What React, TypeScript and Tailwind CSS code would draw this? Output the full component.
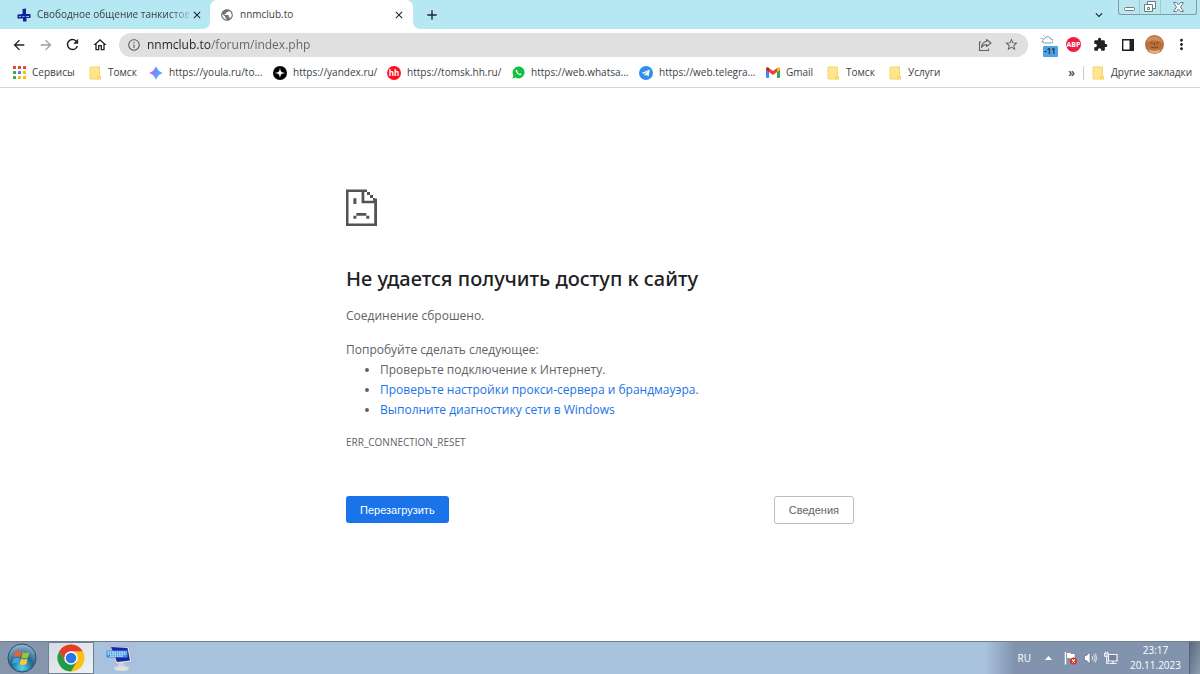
import React, { useState } from "react";
import {
  MdArrowBack,
  MdArrowForward,
  MdClose,
  MdAdd,
  MdExtension,
  MdExpandMore,
  MdInfoOutline,
  MdMoreVert,
  MdOutlineHome,
  MdPublic,
  MdRefresh,
  MdStarBorder,
} from "react-icons/md";

const FolderIcon = () => (
  <svg width="13" height="14" viewBox="0 0 13 14">
    <path d="M1 1h9.5v8.5l1 1V13H1z" fill="#ffe68f" stroke="#f7d56b" strokeWidth="1" />
    <path d="M8.5 13v-2.500h3V13z" fill="#ffe68f" stroke="#f3cd55" strokeWidth="0.8" />
  </svg>
);

const appColors = ["#ea4335", "#ea4335", "#ea4335", "#34a853", "#4285f4", "#fbbc05", "#34a853", "#fbbc05", "#fbbc05"];

const AppsIcon = () => (
  <svg width="13" height="13" viewBox="0 0 13 13">
    {appColors.map((color, i) => (
      <rect key={i} x={(i % 3) * 5} y={Math.floor(i / 3) * 5} width="3" height="3" rx="0.5" fill={color} />
    ))}
  </svg>
);

const YoulaIcon = () => (
  <svg width="14" height="14" viewBox="0 0 14 14">
    <defs>
      <linearGradient id="youla" x1="0" y1="0.3" x2="1" y2="0.7">
        <stop offset="0" stopColor="#c05cff" />
        <stop offset="0.5" stopColor="#6f90ff" />
        <stop offset="1" stopColor="#22c8ff" />
      </linearGradient>
    </defs>
    <path d="M7 0C8.600 4 10 5.400 14 7C10 8.600 8.600 10 7 14C5.400 10 4 8.600 0 7C4 5.400 5.400 4 7 0z" fill="url(#youla)" />
  </svg>
);

const YandexIcon = () => (
  <svg width="14" height="14" viewBox="0 0 14 14">
    <circle cx="7" cy="7" r="7" fill="#000" />
    <path d="M7 1.500C7.400 5.600 8.400 6.600 12.500 7C8.400 7.400 7.400 8.400 7 12.500C6.600 8.400 5.600 7.400 1.500 7C5.600 6.600 6.600 5.600 7 1.500z" fill="#fff" />
  </svg>
);

const HhIcon = () => (
  <span className="flex size-3.5 items-center justify-center rounded-full bg-[#ff0f1e] text-[8px] leading-none font-bold text-white">
    hh
  </span>
);

const WhatsAppIcon = () => (
  <svg width="13" height="13" viewBox="0 0 13 13">
    <path d="M6.600 0.600a5.900 5.900 0 1 1-2.900 11L0.500 12.500l0.900-3.100A5.900 5.900 0 0 1 6.600 0.600z" fill="#12bf43" />
    <path d="M4.500 3.500c-.9.500-1 1.500-.4 2.600.8 1.500 1.900 2.600 3.400 3.100 1 .3 1.800-.1 2.100-1l-1.500-.9-.7.700C6.300 7.500 5.600 6.700 5.200 5.800l.6-.6z" fill="#fff" />
  </svg>
);

const TelegramIcon = () => (
  <svg width="14" height="14" viewBox="0 0 14 14">
    <circle cx="7" cy="7" r="7" fill="#2f8fec" />
    <path d="M2.500 6.900L10.900 3.500L9.500 10.600L7 8.800L5.800 10L5.500 8.200L9.300 4.900L4.700 7.800z" fill="#fff" />
  </svg>
);

const GmailIcon = () => (
  <svg width="14" height="11" viewBox="0 0 14 11">
    <path d="M0 2v8a1 1 0 0 0 1 1h2V4.500z" fill="#4285f4" />
    <path d="M14 2v8a1 1 0 0 1-1 1h-2V4.500z" fill="#34a853" />
    <path d="M11 1.200V5l3-2.300V1.800C14 .3 12.400-.3 11.300.7z" fill="#fbbc04" />
    <path d="M3 5V1l4 3 4-3v4L7 8z" fill="#ea4335" />
    <path d="M0 1.800v.9L3 5V1.200L2.700.7C1.600-.3 0 .3 0 1.800z" fill="#c5221f" />
  </svg>
);

const bookmarks = [
  { icon: AppsIcon, label: "Сервисы", width: "w-[76px]" },
  { icon: FolderIcon, label: "Томск", width: "w-[60px]" },
  { icon: YoulaIcon, label: "https://youla.ru/to...", width: "w-[124px]" },
  { icon: YandexIcon, label: "https://yandex.ru/", width: "w-[114px]" },
  { icon: HhIcon, label: "https://tomsk.hh.ru/", width: "w-[125px]" },
  { icon: WhatsAppIcon, label: "https://web.whatsa...", width: "w-[127px]" },
  { icon: TelegramIcon, label: "https://web.telegra...", width: "w-[127px]" },
  { icon: GmailIcon, label: "Gmail", width: "w-[61px]" },
  { icon: FolderIcon, label: "Томск", width: "w-[62px]" },
  { icon: FolderIcon, label: "Услуги", width: "w-[61px]" },
];

const TankIcon = () => (
  <svg width="14" height="14" viewBox="0 0 14 14">
    <path d="M5.500 1l3.500-.5V6h4.500v4H9.500v3.500H6V10.500H.5v-4L5.500 6z" fill="#12239a" />
    <path d="M2 8.500h2M5.500 8.500h2M9 8.500h3" stroke="#a7b3ea" strokeWidth="1" />
  </svg>
);

const ShareIcon = () => (
  <svg width="14" height="14" viewBox="0 0 14 14" fill="none" stroke="#5f6368" strokeWidth="1.100">
    <path d="M3 4H1.500v8.500h9V10.500" />
    <path d="M8.500 1.500L13 5L8.500 8.500V6.500C6 6.500 4.500 7.500 3.500 9.500C3.800 6 5.500 3.800 8.500 3.500z" strokeLinejoin="round" />
  </svg>
);

const SadPageIcon = () => (
  <svg width="31" height="38" viewBox="0 0 31 38" fill="#535353">
    <path d="M0 .5h21V3H2.500v31.500h25.700V14.300H15.600V3h2.700v8.700h9.900V9.500H31V37H0z" />
    <path d="M21 3h3v3h-3zM24 6h3v3h-3zM27 9h2v2.700h-2z" />
    <path d="M7.400 9.300h3V15h-3zM10.400 24h9.900v2.700h-9.900zM7.400 26.700h3v3h-3zM20.300 26.700h3v3h-3z" />
  </svg>
);

const WindowControls = () => (
  <div className="flex h-[15px] w-[79px] self-start rounded-b-[3px] border border-t-0 border-[#7f9ba6] bg-[#b9e6ef]">
    <button aria-label="Свернуть" className="flex w-[21px] items-center justify-center border-r border-[#a1c9d2]">
      <svg width="11" height="12" viewBox="0 0 11 12">
        <rect x="0.500" y="6.500" width="10" height="3" rx="1" fill="#fff" stroke="#6c7c84" />
      </svg>
    </button>
    <button aria-label="Развернуть" className="flex w-[21px] items-center justify-center border-r border-[#a1c9d2]">
      <svg width="12" height="12" viewBox="0 0 12 12" fill="#fff" stroke="#6c7c84">
        <path d="M3.500 0.500h8v7h-8z" />
        <path d="M0.500 3.500h8v7h-8z" />
        <path d="M3.500 6.500h2v2h-2z" />
      </svg>
    </button>
    <button aria-label="Закрыть окно" className="flex flex-1 items-center justify-center">
      <svg width="11" height="10" viewBox="0 0 11 10">
        <path d="M0.500 0.500h3l2 2.500 2-2.500h3L7.500 5l3 4.500h-3l-2-2.500-2 2.500h-3L3.500 5z" fill="#fff" stroke="#6c7c84" />
      </svg>
    </button>
  </div>
);

const TabStrip = () => (
  <div className="flex h-[29px] items-center bg-[#b5e8f3]">
    <div className="flex w-[203px] shrink-0 items-center pl-[17px]">
      <TankIcon />
      <span className="ml-1.5 w-[152px] whitespace-nowrap [mask-image:linear-gradient(to_right,#000_88%,#0003)]">
        Свободное общение танкистов
      </span>
      <button aria-label="Закрыть вкладку" className="ml-0.5 text-[#202124]">
        <MdClose size={12} />
      </button>
    </div>
    <svg className="self-end" width="7" height="7" viewBox="0 0 7 7">
      <path d="M7 0v7H0A7 7 0 0 0 7 0z" fill="#fff" />
    </svg>
    <div className="flex h-full w-[203px] shrink-0 items-center rounded-t-[7px] bg-white pr-2 pl-2.5">
      <MdPublic size={14} color="#6f7377" />
      <span className="ml-1.5 flex-1">nnmclub.to</span>
      <button aria-label="Закрыть вкладку" className="text-[#202124]">
        <MdClose size={12} />
      </button>
    </div>
    <svg className="self-end" width="7" height="7" viewBox="0 0 7 7">
      <path d="M0 0v7h7A7 7 0 0 1 0 0z" fill="#fff" />
    </svg>
    <button aria-label="Новая вкладка" className="ml-1 text-[#202124]">
      <MdAdd size={16} />
    </button>
    <button aria-label="Поиск вкладок" className="mr-3 ml-auto text-[#202124]">
      <MdExpandMore size={14} />
    </button>
    <WindowControls />
    <div className="w-[3px]" />
  </div>
);

const toolButton = "flex w-[27px] shrink-0 items-center justify-center";

const Toolbar = () => {
  const [url, setUrl] = useState("nnmclub.to/forum/index.php");

  return (
    <div className="flex h-[31px] items-center pr-[5px] pl-[5px] text-[#202124]">
      <button aria-label="Назад" className={toolButton}>
        <MdArrowBack size={16} />
      </button>
      <button aria-label="Вперед" className={toolButton}>
        <MdArrowForward size={16} color="#9a9da1" />
      </button>
      <button aria-label="Обновить" className={toolButton}>
        <MdRefresh size={17} />
      </button>
      <button aria-label="Главная" className={toolButton}>
        <MdOutlineHome size={16} />
      </button>
      <div className="mr-[5px] ml-1.5 flex h-6 flex-1 items-center rounded-full bg-[#e0e0e0] pr-[9px] pl-2">
        <MdInfoOutline size={14} color="#5f6368" />
        <input
          aria-label="Адресная строка"
          value={url}
          onChange={(e) => setUrl(e.target.value)}
          className="ml-1.5 min-w-0 flex-1 bg-[linear-gradient(to_right,#202124_64px,#5f6368_64px)] bg-clip-text text-[12px] text-transparent outline-none"
        />
        <button aria-label="Поделиться">
          <ShareIcon />
        </button>
        <button aria-label="Добавить в закладки" className="ml-3">
          <MdStarBorder size={15} color="#5f6368" />
        </button>
      </div>
      <button aria-label="Погода" className={toolButton}>
        <span className="relative flex h-[22px] w-4">
          <svg width="14" height="12" viewBox="0 0 14 12" fill="none">
            <path d="M1 4.500h3M4.500 1l1 1.500M2 8h3" stroke="#d9b48a" />
            <path d="M5.500 9a2.300 2.300 0 0 1 .3-4.500A3 3 0 0 1 11.500 5a2 2 0 0 1 1 4z" fill="#fff" stroke="#5c9fd0" />
          </svg>
          <span className="absolute top-3 left-1 flex h-[11px] w-[15px] items-center justify-center rounded-[1px] bg-[#4ba3ea] text-[8px] leading-none font-semibold">
            -11
          </span>
        </span>
      </button>
      <button aria-label="Adblock Plus" className={toolButton}>
        <span className="flex size-[15px] items-center justify-center rounded-full bg-[#ed1e45] text-[7px] leading-none font-bold text-white">
          ABP
        </span>
      </button>
      <button aria-label="Расширения" className={toolButton}>
        <MdExtension size={15} />
      </button>
      <button aria-label="Боковая панель" className={toolButton}>
        <svg width="12" height="12" viewBox="0 0 12 12">
          <path d="M0.700 0.700h10.600v10.600H0.700z" fill="none" stroke="#202124" strokeWidth="1.400" />
          <path d="M7.500 0.500h4v11h-4z" fill="#202124" />
        </svg>
      </button>
      <button aria-label="Профиль" className={toolButton}>
        <svg width="19" height="19" viewBox="0 0 19 19">
          <circle cx="9.500" cy="9.500" r="9.500" fill="#b8703c" />
          <path d="M2 4.500C5 1 12 0 16 4l2 4c-5-3-10-3-16-1z" fill="#cf8c58" />
          <path d="M5 8.500c1-1 2-1 3 0M11 8.500c1-1 2-1 3 0M6 12c2 1 5 1 7 0M9.500 8v2.500" stroke="#7c4020" fill="none" />
          <path d="M3 14.500c4 1.500 9 1.500 13 0-2 3-4 4-6.500 4S5 17.500 3 14.500z" fill="#dcb08a" />
        </svg>
      </button>
      <button aria-label="Меню" className={toolButton}>
        <MdMoreVert size={17} />
      </button>
    </div>
  );
};

const BookmarksBar = () => (
  <div className="flex h-7 items-center border-b border-[#d5d7da] pr-2 pb-0.5 pl-[13px]">
    {bookmarks.map(({ icon: Icon, label, width }, i) => (
      <a key={i} href="#" className={`flex shrink-0 items-center gap-1.5 whitespace-nowrap ${width}`}>
        <Icon />
        <span>{label}</span>
      </a>
    ))}
    <button aria-label="Другие" className="ml-auto text-[12px] leading-none font-semibold">
      »
    </button>
    <div className="mx-2 h-3.5 w-px bg-[#c8cbd0]" />
    <a href="#" className="flex shrink-0 items-center gap-1.5 whitespace-nowrap">
      <FolderIcon />
      <span>Другие закладки</span>
    </a>
  </div>
);

const ErrorPage = () => (
  <main className="mx-auto w-full max-w-[508px] flex-1 pt-[101px] text-[12px] leading-5 text-[#5f6368]">
    <SadPageIcon />
    <h1 className="mt-10 font-['Noto_Sans',sans-serif] text-[20px] leading-6 font-medium text-[#202124]">
      Не удается получить доступ к сайту
    </h1>
    <p className="mt-[15px]">Соединение сброшено.</p>
    <p className="mt-3.5">Попробуйте сделать следующее:</p>
    <ul className="list-disc pl-[34px]">
      <li>Проверьте подключение к Интернету.</li>
      <li>
        <a href="#" className="text-[#1a73e8]">
          Проверьте настройки прокси-сервера и брандмауэра
        </a>
        .
      </li>
      <li>
        <a href="#" className="text-[#1a73e8]">
          Выполните диагностику сети в Windows
        </a>
      </li>
    </ul>
    <p className="mt-3 text-[10px]">ERR_CONNECTION_RESET</p>
    <div className="mt-11 flex items-start justify-between font-['Liberation_Sans',sans-serif] text-[11px]">
      <button className="h-[27px] rounded-[3px] bg-[#1a73e8] px-3.5 text-white">Перезагрузить</button>
      <button className="h-7 rounded-[3px] border border-[#b9bfc5] px-3.5">Сведения</button>
    </div>
  </main>
);

const StartOrb = () => (
  <svg width="30" height="30" viewBox="0 0 30 30">
    <defs>
      <radialGradient id="orb" cx="0.5" cy="0.85" r="0.8">
        <stop offset="0" stopColor="#59d6ef" />
        <stop offset="0.5" stopColor="#21648f" />
        <stop offset="1" stopColor="#8eb2c8" />
      </radialGradient>
    </defs>
    <circle cx="15" cy="15" r="14" fill="url(#orb)" stroke="#294a68" />
    <path d="M8 9c2.500-1.500 4.500-1.300 6.500-.3l-1.300 5.500c-2-1-4.200-1-6.500.2z" fill="#ee6030" />
    <path d="M15.500 9.200c2 1 4.300 1 7-.3l-1.500 5.600c-2.300 1.200-4.600 1.200-6.800.2z" fill="#93c83c" />
    <path d="M6.400 15.500c2.300-1.200 4.500-1.200 6.500-.3l-1.300 5.500c-2-1-4.200-1-6.600.3z" fill="#3ba5e0" />
    <path d="M13.900 15.700c2.200 1 4.500 1 6.800-.2l-1.400 5.600c-2.300 1.200-4.600 1.200-6.800.2z" fill="#fdc933" />
  </svg>
);

const ChromeLogo = () => (
  <svg width="28" height="28" viewBox="0 0 28 28">
    <circle cx="14" cy="14" r="13.500" fill="#fbc116" />
    <path d="M2.300 7.250A13.500 13.500 0 0 1 25.700 7.250H14L8.200 17.400z" fill="#e33b2e" />
    <path d="M2.300 7.250A13.500 13.500 0 0 0 14 27.500L19.900 17.400H8.200z" fill="#229a4b" />
    <circle cx="14" cy="14" r="6.750" fill="#fff" />
    <circle cx="14" cy="14" r="5.300" fill="#2a76e8" />
  </svg>
);

const KeyboardIcon = () => (
  <svg width="27" height="27" viewBox="0 0 27 27">
    <path d="M4 1l19 1 3 15-16 2z" fill="#dfe3e7" stroke="#9aa3ad" strokeWidth="0.600" />
    <path d="M5 2l16.500 1L24 15.500l-13 1.500z" fill="#1527a8" />
    <path d="M12 18.500l6-1 1 5-6 1z" fill="#cdd2d8" />
    <ellipse cx="15.500" cy="23.500" rx="7.500" ry="2.500" fill="#dde1e5" />
    <path d="M0.500 5.500h21v7h-21z" fill="#3d91dd" />
    <path d="M1.500 7.200h19M1.500 9.200h19M4 11.200h13" stroke="#e5f3ff" strokeDasharray="1.600 0.700" strokeWidth="1.200" />
  </svg>
);

const TrayIcons = () => (
  <div className="flex items-center gap-[7px]">
    <svg width="13" height="14" viewBox="0 0 13 14">
      <path d="M1.500 1v12.500" stroke="#fff" strokeWidth="1.500" />
      <path d="M2.500 1.500h3.500l1 1h4v6H7l-1-1H2.500z" fill="#fff" stroke="#56616f" strokeWidth="0.500" />
      <circle cx="9.500" cy="10" r="3.500" fill="#dc2c25" />
      <path d="M8 8.500l3 3M11 8.500l-3 3" stroke="#fff" strokeWidth="1.100" />
    </svg>
    <svg width="13" height="14" viewBox="0 0 13 14" fill="none">
      <path d="M0.500 4.500h2L6 1v12L2.500 9.500h-2z" fill="#fff" stroke="#566273" strokeWidth="0.600" />
      <path d="M8 5q1.500 2 0 4M9.800 3.500q2.500 3.500 0 7M11.500 2.500q2 4.500 0 9" stroke="#e6ecf3" strokeWidth="0.900" />
    </svg>
    <svg width="14" height="14" viewBox="0 0 14 14">
      <path d="M4.500 3.500h8.500v6.500H4.500z" fill="#718399" stroke="#f4f6f8" strokeWidth="1.200" />
      <path d="M5.500 12.500h7M9 10v2.500" stroke="#f4f6f8" strokeWidth="1.200" />
      <path d="M0.500 2h4v3.500h-4zM2.500 5.500v7h2.500M1.500 0.500v1.500M3.500 0.500v1.500" fill="#bdc7d3" stroke="#f4f6f8" strokeWidth="0.800" />
    </svg>
  </div>
);

const Taskbar = () => (
  <footer className="flex h-[33px] items-stretch border-t border-[#707d8e] bg-[#a8c1dd]">
    <button aria-label="Пуск" className="flex w-12 items-center justify-center bg-[#8595ac] pr-1">
      <StartOrb />
    </button>
    <button
      aria-label="Google Chrome"
      className="flex w-[46px] items-center justify-center border border-[#6f8093] bg-linear-to-br from-[#d5dbe3] to-[#eef2f6]"
    >
      <ChromeLogo />
    </button>
    <button aria-label="Экранная клавиатура" className="ml-3 flex items-center">
      <KeyboardIcon />
    </button>
    <div className="ml-auto flex items-center bg-[linear-gradient(to_right,#a8c1dd,#8294ad_28px)] pl-8 text-white">
      <span>RU</span>
      <button aria-label="Скрытые значки" className="mr-3 ml-3.5">
        <svg width="7" height="4" viewBox="0 0 7 4">
          <path d="M0 4l3.500-4L7 4z" fill="#fff" />
        </svg>
      </button>
      <TrayIcons />
      <time className="mr-2 ml-3 text-center leading-[15px]">
        23:17
        <br />
        20.11.2023
      </time>
      <button
        aria-label="Свернуть все окна"
        className="h-full w-[11px] border-l border-[#56657a] bg-linear-to-br from-[#5b6c80] to-[#8c9db0]"
      />
    </div>
  </footer>
);

export default function App() {
  return (
    <div className="flex min-h-screen flex-col bg-white font-['Open_Sans','Noto_Sans',sans-serif] text-[10px] text-[#3c4043]">
      <header>
        <TabStrip />
        <Toolbar />
        <BookmarksBar />
      </header>
      <ErrorPage />
      <Taskbar />
    </div>
  );
}
